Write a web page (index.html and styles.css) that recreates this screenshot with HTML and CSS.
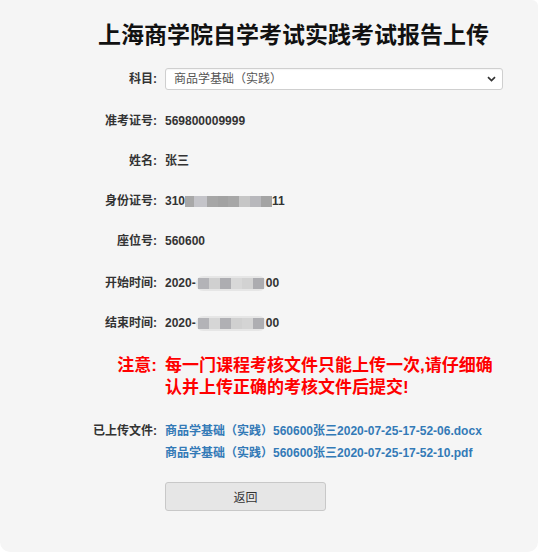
FILE: index.html
```html
<!DOCTYPE html>
<html lang="zh-CN">
<head>
<meta charset="utf-8">
<title>上海商学院自学考试实践考试报告上传</title>
<link rel="stylesheet" href="styles.css">
</head>
<body>
<div class="panel">
  <h1 class="title">上海商学院自学考试实践考试报告上传</h1>
  <div class="form">
    <div class="row row-subject">
      <div class="label">科目:</div>
      <div class="value">
        <div class="select">
          <span class="select-text">商品学基础（实践）</span>
          <svg class="chev" width="9" height="6" viewBox="0 0 9 6"><path d="M1 1.2 L4.5 4.6 L8 1.2" fill="none" stroke="#333" stroke-width="1.7"/></svg>
        </div>
      </div>
    </div>
    <div class="row r1">
      <div class="label">准考证号:</div>
      <div class="value strong">569800009999</div>
    </div>
    <div class="row r2">
      <div class="label">姓名:</div>
      <div class="value strong">张三</div>
    </div>
    <div class="row r2">
      <div class="label">身份证号:</div>
      <div class="value strong">310<span class="mosaic id"><i class="m1"></i><i class="m2"></i><i class="m3"></i><i class="m4"></i><i class="m5"></i><i class="m6"></i><i class="m7"></i><i class="m8"></i></span>11</div>
    </div>
    <div class="row r2">
      <div class="label">座位号:</div>
      <div class="value strong">560600</div>
    </div>
    <div class="row r1">
      <div class="label">开始时间:</div>
      <div class="value strong">2020-<span class="mosaic date"><i class="d1"></i><i class="d2"></i><i class="d3"></i><i class="d4"></i><i class="d5"></i><i class="d6"></i></span>00</div>
    </div>
    <div class="row r2">
      <div class="label">结束时间:</div>
      <div class="value strong">2020-<span class="mosaic date"><i class="e1"></i><i class="e2"></i><i class="e3"></i><i class="e4"></i><i class="e5"></i><i class="e6"></i></span>00</div>
    </div>
    <div class="row notice">
      <div class="label">注意:</div>
      <div class="value">每一门课程考核文件只能上传一次,请仔细确认并上传正确的考核文件后提交!</div>
    </div>
    <div class="row files">
      <div class="label">已上传文件:</div>
      <div class="value links">
        <a href="#">商品学基础（实践）560600张三2020-07-25-17-52-06.docx</a>
        <a href="#">商品学基础（实践）560600张三2020-07-25-17-52-10.pdf</a>
      </div>
    </div>
    <div class="row actions">
      <div class="label"></div>
      <div class="value"><button class="btn" type="button">返回</button></div>
    </div>
  </div>
</div>
</body>
</html>
```

FILE: styles.css
```css
html, body {
  margin: 0;
  padding: 0;
  background: #ffffff;
}
body {
  font-family: "Liberation Sans", "Noto Sans CJK SC", sans-serif;
  color: #333;
  font-size: 12px;
}
.panel {
  width: 538px;
  height: 552px;
  background: #f5f5f5;
  border-radius: 0 6px 10px 10px;
  overflow: hidden;
  box-sizing: border-box;
  padding-top: 18px;
}
.title {
  margin: 0 0 0 49px;
  text-align: center;
  font-family: "Noto Sans CJK SC", sans-serif;
  font-size: 23px;
  line-height: 30px;
  font-weight: bold;
  color: #111;
  letter-spacing: 0;
  white-space: nowrap;
}
.form {
  display: flex;
  flex-direction: column;
  margin-top: 20px;
}
.row {
  display: grid;
  grid-template-columns: 157px 338px;
  column-gap: 8px;
  align-items: center;
  line-height: 22px;
  min-height: 22px;
}
.r1 { margin-top: 20px; }
.r2 { margin-top: 18px; }
.label {
  text-align: right;
  font-weight: bold;
  color: #333;
  white-space: nowrap;
}
.value { min-width: 0; }
.strong { font-weight: bold; color: #333; display: flex; align-items: center; }
.select {
  height: 22px;
  box-sizing: border-box;
  border: 1px solid #cfcfcf;
  border-radius: 3px;
  background: #fff;
  display: flex;
  align-items: center;
  justify-content: space-between;
  padding: 0 5px 0 8px;
  box-shadow: inset 0 1px 1px rgba(0,0,0,0.04);
}
.select-text {
  color: #555;
  font-size: 12px;
}
.chev { display: block; margin-right: 1px; }

.mosaic { display: inline-flex; align-items: center; }
.mosaic i { display: block; }
.id i { height: 11px; }
.id .m1 { width: 9px; background: #a8a8a8; }
.id .m2 { width: 13px; background: #c4c4c9; }
.id .m3 { width: 11px; background: #a6a6a6; }
.id .m4 { width: 10px; background: #a2a2a2; }
.id .m5 { width: 11px; background: #a7a7a7; }
.id .m6 { width: 11px; background: #c6c6c6; }
.id .m7 { width: 11px; background: #b8b8bc; }
.id .m8 { width: 11px; background: #a4a4a4; }

.date {
  height: 15px;
  padding: 0 2px;
  background: #e6e6e6;
  border-radius: 7px;
  filter: blur(0.4px);
}
.date i { height: 11px; }
.date .d1, .date .e1 { width: 11px; background: #b3b3b7; }
.date .d2 { width: 11px; background: #d0d0d0; }
.date .d3 { width: 11px; background: #adadb1; }
.date .d4 { width: 11px; background: #d8d8d8; }
.date .d5 { width: 11px; background: #d2d2d2; }
.date .d6 { width: 11px; background: #acacb0; }
.date .e2 { width: 11px; background: #d6d6d6; }
.date .e3 { width: 11px; background: #b0b0b4; }
.date .e4 { width: 11px; background: #d0d0d0; }
.date .e5 { width: 11px; background: #d4d4d4; }
.date .e6 { width: 11px; background: #aeaeb2; }

.notice {
  margin-top: 21px;
  align-items: start;
}
.notice .label,
.notice .value {
  color: #ff0000;
  font-weight: bold;
  font-size: 17px;
  line-height: 22px;
}
.files {
  margin-top: 21px;
  align-items: start;
}
.links {
  display: flex;
  flex-direction: column;
}
.links a {
  color: #337ab7;
  text-decoration: none;
  font-weight: bold;
  line-height: 22px;
  white-space: nowrap;
}
.actions { margin-top: 18px; }
.btn {
  width: 161px;
  height: 29px;
  background: #e6e6e6;
  border: 1px solid #c8c8c8;
  border-radius: 3px;
  font-family: "Liberation Sans", "Noto Sans CJK SC", sans-serif;
  font-size: 12px;
  color: #333;
  padding: 0;
  display: block;
}
```
